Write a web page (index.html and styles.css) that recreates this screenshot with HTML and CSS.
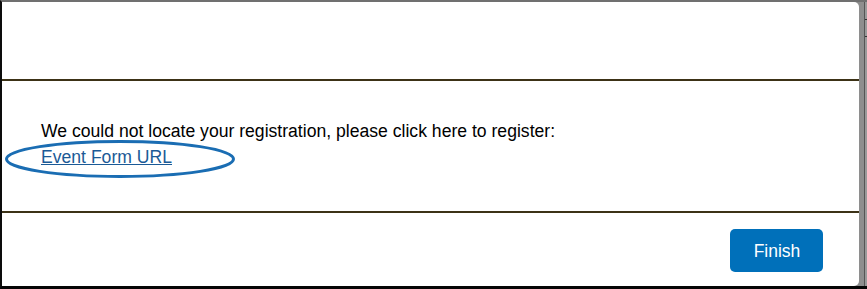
FILE: index.html
```html
<!DOCTYPE html>
<html lang="en">
<head>
<meta charset="utf-8">
<title>Registration</title>
<link rel="stylesheet" href="styles.css">
</head>
<body>
<div class="frame">
  <div class="modal">
    <div class="modal-header"></div>
    <div class="modal-body">
      <p class="message">We could not locate your registration, please click here to register:</p>
      <a class="event-link" href="#">Event Form URL</a>
      <svg class="highlight" width="232" height="40" viewBox="0 0 232 40" aria-hidden="true">
        <ellipse cx="116" cy="20" rx="113.5" ry="17.5" fill="none" stroke="#1a6db3" stroke-width="3"/>
      </svg>
    </div>
    <div class="modal-footer">
      <button class="btn-finish" type="button">Finish</button>
    </div>
  </div>
  <div class="backdrop-edge"></div>
  <div class="backdrop-strip">
    <span class="strip-line l1"></span>
    <span class="strip-line l2"></span>
  </div>
</div>
</body>
</html>
```

FILE: styles.css
```css
html, body {
  margin: 0;
  padding: 0;
}

body {
  width: 867px;
  height: 289px;
  overflow: hidden;
  background: #8c8c8c;
  font-family: "Liberation Sans", Arial, sans-serif;
}

.frame {
  box-sizing: border-box;
  height: 289px;
  display: flex;
  border-left: 2px solid #0c0c0c;
  border-top: 2px solid #707070;
  border-bottom: 3px solid #050505;
  background: #8c8c8c;
}

.modal {
  width: 857px;
  flex: none;
  background: #ffffff;
  border-radius: 0 5px 5px 0;
  display: flex;
  flex-direction: column;
}

.modal-header {
  height: 77px;
  border-bottom: 2px solid #3c3216;
  flex: none;
}

.modal-body {
  position: relative;
  height: 132px;
  box-sizing: border-box;
  padding: 37px 0 0 39px;
  border-bottom: 2px solid #3c3216;
  flex: none;
  font-size: 17.6px;
  line-height: 26px;
  color: #000;
}

.message {
  margin: 0;
}

.event-link {
  color: #1b5a96;
  text-decoration: underline;
}

.highlight {
  position: absolute;
  left: 2px;
  top: 58px;
}

.modal-footer {
  flex: 1;
  display: flex;
  justify-content: flex-end;
  align-items: flex-start;
  padding: 16px 36px 0 0;
}

.btn-finish {
  width: 93px;
  height: 43px;
  border: none;
  border-radius: 5px;
  background: #0070ba;
  color: #ffffff;
  font-family: "Liberation Sans", Arial, sans-serif;
  font-size: 17.5px;
  padding: 0 0 0 1px;
  line-height: 45px;
}

.backdrop-edge {
  width: 5px;
  flex: none;
  background: #8e8e8e;
}

.backdrop-strip {
  position: relative;
  flex: 1;
  background: #9a9a9a;
  border-left: 1px solid #555;
}

.strip-line {
  position: absolute;
  left: 0;
  right: 0;
  height: 1px;
  background: #333;
}

.l1 { top: 17px; }
.l2 { top: 34px; }
```
